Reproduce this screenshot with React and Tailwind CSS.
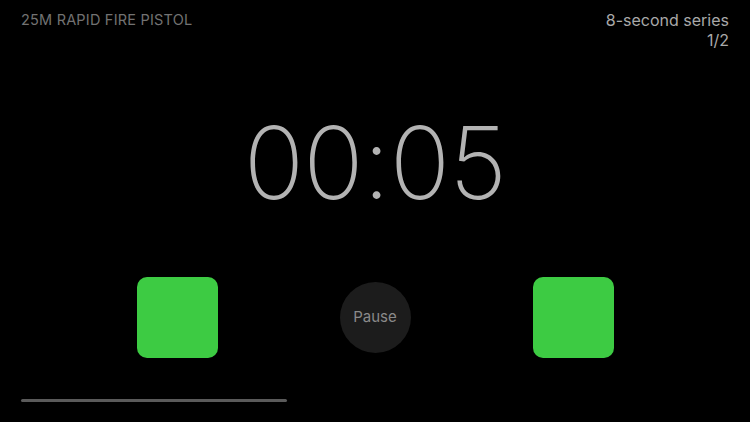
import React from 'react';

const App = () => {
  const progress = 37.5; // percent of series elapsed

  return (
    <div className="w-[750px] h-[422px] bg-black flex flex-col overflow-hidden" style={{ fontFamily: 'Inter, "Noto Sans", sans-serif' }}>
      {/* Header */}
      <div className="flex justify-between items-start px-[21px] pt-[10px]">
        <div className="text-[14.5px] leading-[20px] text-[#727272] tracking-[0.2px]">25M RAPID FIRE PISTOL</div>
        <div className="text-right text-[#a9a9a9] text-[16px] leading-[20px]">
          <div>8-second series</div>
          <div>1/2</div>
        </div>
      </div>

      {/* Timer */}
      <div className="flex justify-center mt-[57px]">
        <div className="text-[100px] leading-[112px] font-extralight text-[#b3b3b3] tracking-[-0.8px]">00:05</div>
      </div>

      {/* Controls */}
      <div className="flex justify-center items-center gap-[122px] mt-[58px]">
        <button className="w-[81px] h-[81px] rounded-[10px] bg-[#3dcb43]" />
        <button className="w-[71px] h-[71px] rounded-full bg-[#1c1c1c] text-[#8a8a8a] text-[15px] flex items-center justify-center">
          Pause
        </button>
        <button className="w-[81px] h-[81px] rounded-[10px] bg-[#3dcb43]" />
      </div>

      {/* Progress */}
      <div className="mt-auto mb-[20px] px-[21px]">
        <div className="w-[266px] h-[3px] rounded-full bg-[#5a5a5a]" />
      </div>
    </div>
  );
};

export default App;
